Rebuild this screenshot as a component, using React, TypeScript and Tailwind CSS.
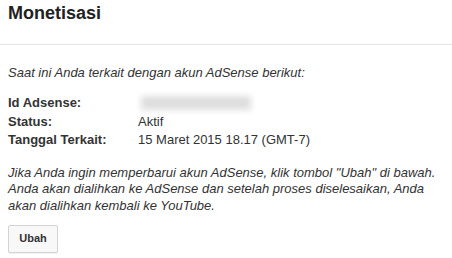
export default function App() {
  return (
    <div className="w-[452px] h-[258px] bg-white text-[#333] font-['Liberation_Sans',Arial,sans-serif] overflow-hidden">
      <div className="h-[44px] px-2 pt-[1px]">
        <h1 className="text-[18px] leading-[24px] font-bold text-[#222]">Monetisasi</h1>
      </div>
      <div className="h-px bg-[#e5e5e5]" />

      <div className="pl-2">
        <p className="mt-[20px] text-[13px] leading-[16px] italic">
          Saat ini Anda terkait dengan akun AdSense berikut:
        </p>

        <div className="mt-[13px] grid grid-cols-[130px_1fr] text-[13px] leading-[18.5px]">
          <div className="font-bold">Id Adsense:</div>
          <div className="flex items-center">
            <div className="ml-[3px] w-[110px] h-[14px] bg-[#dedede] blur-[3px]" />
          </div>
          <div className="font-bold">Status:</div>
          <div>Aktif</div>
          <div className="font-bold">Tanggal Terkait:</div>
          <div>15 Maret 2015 18.17 (GMT-7)</div>
        </div>

        <p className="mt-[15px] text-[13px] leading-[16.7px] italic">
          Jika Anda ingin memperbarui akun AdSense, klik tombol "Ubah" di bawah. Anda akan dialihkan ke AdSense dan
          setelah proses diselesaikan, Anda akan dialihkan kembali ke YouTube.
        </p>

        <button className="mt-[10px] w-[50px] h-[28px] rounded-[2px] border border-[#d3d3d3] bg-[#f8f8f8] text-[11px] font-bold text-[#333] shadow-[0_1px_0_rgba(0,0,0,0.05)]">
          Ubah
        </button>
      </div>
    </div>
  )
}
